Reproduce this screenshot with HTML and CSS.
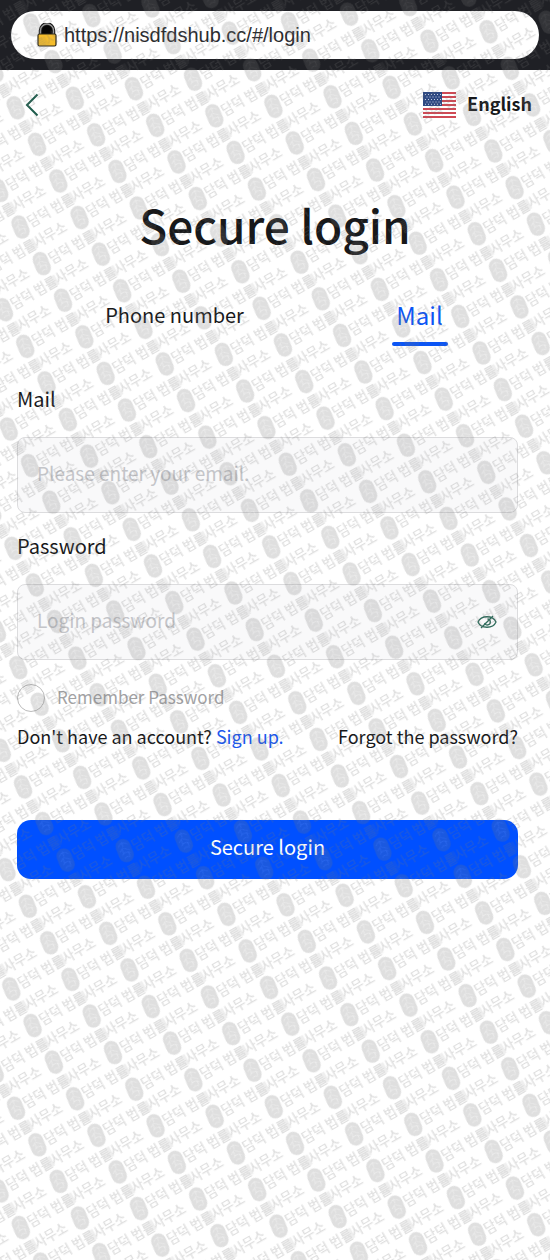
FILE: index.html
```html
<!DOCTYPE html>
<html lang="en">
<head>
<meta charset="utf-8">
<meta name="viewport" content="width=device-width, initial-scale=1">
<title>Secure login</title>
<link rel="stylesheet" href="styles.css">
</head>
<body>
<div class="browser-bar">
  <div class="address">
    <svg class="lock" viewBox="0 0 20 24" aria-hidden="true">
      <path d="M4.500 11V7.500a5.500 5.500 0 0 1 11 0V11z" fill="#050505"/>
      <path d="M3.500 12V7.500a6.500 6.500 0 0 1 13 0V12" fill="none" stroke="#111" stroke-width="3.500"/>
      <path d="M3.500 12V7.500a6.500 6.500 0 0 1 13 0V12" fill="none" stroke="#999" stroke-width="1.400"/>
      <rect x="1" y="11" width="18" height="12" rx="1.500" fill="#f5bd2c" stroke="#2b2618" stroke-width="1.200"/>
    </svg>
    <span>https://nisdfdshub.cc/#/login</span>
  </div>
</div>
<main class="page">
  <header class="nav">
    <button class="back" type="button" aria-label="Back">
      <svg viewBox="0 0 14 24" aria-hidden="true"><path d="M12.500 1.500 2 12l10.500 10.500" fill="none" stroke="#1e5c4c" stroke-width="2"/></svg>
    </button>
    <button class="language" type="button">
      <svg class="flag" viewBox="0 0 33 26" aria-hidden="true">
        <rect width="33" height="26" fill="#fff"/>
        <path d="M0 1h33M0 5h33M0 9h33M0 13h33M0 17h33M0 21h33M0 25h33" stroke="#cf4a55" stroke-width="2"/>
        <rect width="19" height="14" fill="#2f4a83"/>
        <path d="M2 2.500h16M3.500 5h14M2 7.500h16M3.500 10h14M2 12.300h16" stroke="#c5cfe2" stroke-width="1" stroke-dasharray="1 2"/>
      </svg>
      <span>English</span>
    </button>
  </header>
  <h1 class="title">Secure login</h1>
  <div class="tabs" role="tablist">
    <button class="tab" type="button" role="tab" aria-selected="false">Phone number</button>
    <button class="tab tab-active" type="button" role="tab" aria-selected="true">Mail</button>
  </div>
  <form class="form">
    <label class="label" for="mail">Mail</label>
    <div class="field"><input id="mail" type="email" placeholder="Please enter your email."></div>
    <label class="label" for="password">Password</label>
    <div class="field">
      <input id="password" type="password" placeholder="Login password">
      <button class="reveal" type="button" aria-label="Show password">
        <svg viewBox="0 0 20 14" aria-hidden="true" fill="none" stroke="#2f6b5b" stroke-width="1.300">
          <path d="M1 7c3-7 15-7 18 0-3 7-15 7-18 0z"/>
          <path d="M10.500 4a3 3 0 1 1-3 4M4 13 16 1"/>
        </svg>
      </button>
    </div>
    <label class="remember"><input type="checkbox"><span>Remember Password</span></label>
    <div class="links">
      <span>Don't have an account? <a class="signup" href="#signup">Sign up.</a></span>
      <a href="#forgot">Forgot the password?</a>
    </div>
    <button class="submit" type="button">Secure login</button>
  </form>
</main>
<svg class="watermark" aria-hidden="true">
  <defs>
    <g id="mark">
      <g transform="rotate(8)">
        <rect x="-7.500" y="-12" width="15" height="24" rx="7.500" fill="#777"/>
        <path d="M-5-5q5-6 10 0M-5 0l4-3 6 4M-4 4q4-4 9 0M-3 8q3-3 6 0M0-9v5M-2-2v5M3 2v5" fill="none" stroke="#bbb" stroke-width="0.700"/>
      </g>
      <rect x="50" y="-5.500" width="11" height="11" fill="#777" opacity=".5"/>
      <text class="mark-text" x="9" y="5">담덕 법률사무소</text>
    </g>
    <pattern id="marks" width="1117" height="423" patternUnits="userSpaceOnUse" patternTransform="translate(15.700 107.700) matrix(.08676 -.04978 .05033 .08652 0 0) translate(-130 -210)">
      <g transform="scale(10)">
        <use href="#mark" x="13" y="21"/>
        <use href="#mark" x="68.850" y="-0.150"/>
        <use href="#mark" x="68.850" y="42.150"/>
        <use href="#mark" x="-42.850" y="-0.150"/>
        <use href="#mark" x="-42.850" y="42.150"/>
      </g>
    </pattern>
  </defs>
  <rect width="100%" height="100%" fill="url(#marks)"/>
</svg>
</body>
</html>
```
FILE: styles.css
```css
* { box-sizing: border-box; }

body {
  position: relative;
  min-height: 100vh;
  margin: 0;
  background: #fff;
  color: #17181a;
  font-family: "Noto Sans CJK JP", "Noto Sans CJK KR", sans-serif;
}

button {
  padding: 0;
  border: 0;
  background: none;
  color: inherit;
  font: inherit;
  cursor: pointer;
}

a { color: inherit; text-decoration: none; }

.browser-bar { padding: 11px; background: #1f2025; }

.address {
  display: flex;
  align-items: center;
  gap: 7px;
  height: 48px;
  padding: 0 26px;
  border-radius: 24px;
  background: #fff;
  color: #2b2c2f;
  font: 20px "Liberation Sans", sans-serif;
}

.lock { width: 20px; height: 24px; }

.nav {
  display: flex;
  align-items: center;
  justify-content: space-between;
  height: 70px;
  padding: 0 18px 0 25px;
}

.back svg { display: block; width: 14px; height: 24px; }

.language {
  display: flex;
  align-items: center;
  gap: 11px;
  font-size: 18px;
  font-weight: 700;
  line-height: 24px;
}

.language span { padding-bottom: 4px; }

.flag { width: 33px; height: 26px; }

.title {
  margin: 44px 0 0;
  font-size: 46px;
  font-weight: 500;
  line-height: 80px;
  text-align: center;
}

.tabs { display: flex; margin-top: 28px; padding: 0 8px 0 52px; }

.tab {
  display: flex;
  flex: 1;
  flex-direction: column;
  align-items: center;
  height: 56px;
  font-size: 20px;
  line-height: 46px;
}

.tab-active { color: #0b55f5; font-size: 24px; }

.tab-active::after {
  width: 56px;
  height: 4px;
  margin-top: 4px;
  border-radius: 2px;
  background: #0b55f5;
  content: "";
}

.form { padding: 31px 32px 0 17px; }

.label { display: block; font-size: 20px; line-height: 40px; }

.field {
  display: flex;
  align-items: center;
  height: 76px;
  margin: 18px 0 13px;
  padding: 0 20px 0 19px;
  border: 1px solid #dcdcde;
  border-radius: 8px;
  background: #f9f9fa;
}

.field input {
  flex: 1;
  min-width: 0;
  padding: 0 0 5px;
  border: 0;
  outline: 0;
  background: none;
  font: inherit;
  font-size: 19px;
}

.field input::placeholder { color: #c4c5c9; opacity: 1; }

.reveal svg { display: block; width: 20px; height: 14px; }

.remember {
  display: flex;
  align-items: center;
  gap: 12px;
  margin-top: 24px;
  color: #a2a2a4;
  font-size: 17px;
  line-height: 24px;
}

.remember span { padding-bottom: 3px; }

.remember input {
  width: 28px;
  height: 28px;
  margin: 0;
  border: 1px solid #bbb;
  border-radius: 50%;
  appearance: none;
}

.links {
  display: flex;
  justify-content: space-between;
  margin-top: 10px;
  font-size: 18px;
  line-height: 28px;
}

.signup { color: #1b58ee; }

.submit {
  width: 100%;
  height: 59px;
  margin-top: 70px;
  padding-bottom: 6px;
  border-radius: 14px;
  background: #0050ff;
  color: #fff;
  font-size: 20px;
}

.watermark {
  position: absolute;
  inset: 0;
  width: 100%;
  height: 100%;
  opacity: .23;
  pointer-events: none;
}

.mark-text {
  fill: #777;
  font: 500 13px "Noto Sans CJK KR", sans-serif;
}
```
